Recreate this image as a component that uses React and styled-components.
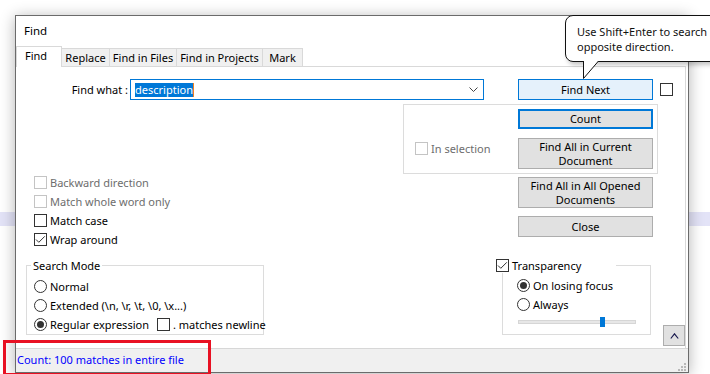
import React from "react";
import styled, { createGlobalStyle } from "styled-components";

const GlobalStyle = createGlobalStyle`
  html, body {
    margin: 0;
    padding: 0;
  }
  body {
    width: 710px;
    height: 374px;
    overflow: hidden;
    font-family: "Noto Sans", "Segoe UI", sans-serif;
    font-size: 11px;
    color: #000;
    background: linear-gradient(
      to bottom,
      #fff 0,
      #fff 212px,
      #e3e3f7 212px,
      #e3e3f7 226px,
      #fff 226px
    );
  }
`;

const Screen = styled.div`
  position: relative;
  width: 710px;
  height: 374px;
  box-sizing: border-box;
  padding: 15px 0 0 15px;
`;

const Window = styled.div`
  width: 674px;
  height: 358px;
  box-sizing: border-box;
  border: 1px solid #6b6b6b;
  background: #fff;
  box-shadow: 0 2px 14px rgba(0, 0, 0, 0.3);
  display: flex;
  flex-direction: column;
`;

const TitleBar = styled.div`
  height: 30px;
  line-height: 30px;
  padding-left: 8px;
  font-size: 11.5px;
`;

const TabBar = styled.div`
  height: 20px;
  display: flex;
  align-items: flex-end;
`;

const Tab = styled.div`
  box-sizing: border-box;
  width: ${(p) => p.$w}px;
  height: ${(p) => (p.$active ? 21 : 18)}px;
  margin-left: ${(p) => (p.$first ? 0 : -1)}px;
  margin-bottom: ${(p) => (p.$active ? -1 : 0)}px;
  padding-right: ${(p) => (p.$active ? 6 : 0)}px;
  border: 1px solid #d9d9d9;
  border-bottom: none;
  background: ${(p) => (p.$active ? "#fff" : "#f0f0f0")};
  text-align: center;
  line-height: ${(p) => (p.$active ? 18 : 17)}px;
  position: relative;
  z-index: ${(p) => (p.$active ? 1 : 0)};
`;

const Panel = styled.div`
  width: 670px;
  height: 282px;
  box-sizing: border-box;
  border-top: 1px solid #d9d9d9;
  border-right: 1px solid #d9d9d9;
  display: flex;
  flex-direction: column;
`;

const FindRow = styled.div`
  margin-top: 12px;
  height: 21px;
  display: flex;
  align-items: center;
`;

const FieldLabel = styled.span`
  width: 112px;
  text-align: right;
`;

const ComboBox = styled.div`
  box-sizing: border-box;
  margin-left: 2px;
  width: 354px;
  height: 21px;
  border: 1px solid #0078d7;
  display: flex;
  align-items: center;
  padding: 0 5px 0 4px;
`;

const Selected = styled.span`
  background: #0078d7;
  color: #fff;
  line-height: 14px;
  border-right: 1px solid #f0801e;
`;

const Chevron = styled.svg`
  margin-left: auto;
`;

const Button = styled.button`
  box-sizing: border-box;
  flex: none;
  width: 135px;
  height: ${(p) => p.$h || 21}px;
  margin: ${(p) => p.$mt || 0}px 0 0 ${(p) => p.$ml || 0}px;
  padding: 0;
  font: inherit;
  line-height: 14px;
  color: #000;
  background: ${(p) => (p.$hot ? "#e5f1fb" : "#e1e1e1")};
  border: ${(p) =>
    p.$focus
      ? "2px solid #0078d7"
      : p.$hot
      ? "1px solid #0078d7"
      : "1px solid #adadad"};
`;

const CheckRow = styled.div`
  display: flex;
  align-items: center;
  height: 19px;
  margin: ${(p) => p.$mt || 0}px 0 0 ${(p) => p.$ml || 0}px;
  color: ${(p) => (p.$disabled ? "#6d6d6d" : "#000")};
  white-space: nowrap;
`;

const Box = styled.span`
  box-sizing: border-box;
  flex: none;
  width: 13px;
  height: 13px;
  margin-right: 3px;
  border: 1px solid ${(p) => (p.$disabled ? "#c4c4c4" : "#333")};
  background: #fff;
  display: flex;
  align-items: center;
  justify-content: center;
`;

const Round = styled(Box)`
  border-radius: 50%;
`;

const Dot = styled.span`
  width: 7px;
  height: 7px;
  border-radius: 50%;
  background: #333;
`;

const Middle = styled.div`
  margin-top: 4px;
  display: flex;
  align-items: flex-start;
`;

const LeftOptions = styled.div`
  width: 387px;
  box-sizing: border-box;
  padding: 69px 0 0 18px;
`;

const RightColumn = styled.div`
  width: 255px;
  display: flex;
  flex-direction: column;
`;

const SelectionGroup = styled.div`
  box-sizing: border-box;
  width: 255px;
  height: 70px;
  border: 1px solid #dcdcdc;
  display: flex;
  align-items: flex-start;
`;

const ButtonStack = styled.div`
  margin-left: auto;
  margin-right: 4px;
  padding-top: 4px;
  display: flex;
  flex-direction: column;
`;

const Bottom = styled.div`
  margin-top: 16px;
  display: flex;
  align-items: flex-start;
`;

const GroupBox = styled.div`
  box-sizing: border-box;
  width: ${(p) => p.$w}px;
  height: 70px;
  margin-left: ${(p) => p.$ml}px;
  border: 1px solid #dcdcdc;
  padding-left: ${(p) => p.$pl}px;
`;

const Legend = styled.div`
  width: fit-content;
  height: 15px;
  line-height: 15px;
  margin: -8px 0 ${(p) => p.$mb}px ${(p) => p.$ml}px;
  padding: 0 2px;
  background: #fff;
  display: flex;
  align-items: center;
`;

const LegendCheck = styled(Legend)`
  width: 120px;
  padding: 0;
`;

const Slider = styled.div`
  position: relative;
  width: 118px;
  height: 10px;
  margin: 3px 0 0 1px;
  display: flex;
  align-items: center;
`;

const Track = styled.div`
  width: 100%;
  height: 4px;
  box-sizing: border-box;
  background: #e7e7e7;
  border: 1px solid #d6d6d6;
`;

const Thumb = styled.div`
  position: absolute;
  top: 0;
  left: ${(p) => p.$at}px;
  width: 5px;
  height: 10px;
  background: #0078d7;
`;

const UpButton = styled.button`
  box-sizing: border-box;
  width: 22px;
  height: 21px;
  margin: 60px 0 0 12px;
  padding: 0;
  background: #e1e1e1;
  border: 1px solid #adadad;
  display: flex;
  align-items: center;
  justify-content: center;
`;

const StatusBar = styled.div`
  box-sizing: border-box;
  height: 24px;
  border-top: 1px solid #d7d7d7;
  background: #f0f0f0;
  padding: 3px 2px 0 1px;
  display: flex;
  color: #0000ff;
  line-height: 15px;
`;

const Grip = styled.svg`
  margin: 11px 0 0 auto;
`;

const Tooltip = styled.div`
  position: absolute;
  left: 565px;
  top: 15px;
  width: 170px;
  height: 47px;
  box-sizing: border-box;
  border: 1px solid #111;
  border-radius: 8px;
  background: #fff;
  box-shadow: 2px 3px 4px rgba(0, 0, 0, 0.22);
  padding: 8px 0 0 11px;
  line-height: 15px;
  font-size: 11px;
  color: #111;
`;

const TooltipTail = styled.svg`
  position: absolute;
  left: 16px;
  top: 45px;
`;

const Highlight = styled.div`
  position: absolute;
  left: 3px;
  top: 340px;
  width: 208px;
  height: 36px;
  box-sizing: border-box;
  border: 3px solid #e81123;
`;

const tabs = [
  { label: "Find", w: 46, active: true },
  { label: "Replace", w: 49 },
  { label: "Find in Files", w: 68 },
  { label: "Find in Projects", w: 87 },
  { label: "Mark", w: 41 },
];

const Check = ({ checked, disabled, children, mt, ml }) => (
  <CheckRow $disabled={disabled} $mt={mt} $ml={ml}>
    <Box $disabled={disabled}>
      {checked && (
        <svg width="11" height="11" viewBox="0 0 11 11">
          <polyline points="1,5.5 3.8,8.3 9.8,2.3" fill="none" stroke="#333" strokeWidth="1" />
        </svg>
      )}
    </Box>
    {children}
  </CheckRow>
);

const Radio = ({ on, children }) => (
  <CheckRow>
    <Round>{on && <Dot />}</Round>
    {children}
  </CheckRow>
);

export default function App() {
  return (
    <Screen>
      <GlobalStyle />
      <Window>
        <TitleBar>Find</TitleBar>
        <TabBar>
          {tabs.map((t, i) => (
            <Tab key={t.label} $w={t.w} $active={t.active} $first={i === 0}>
              {t.label}
            </Tab>
          ))}
        </TabBar>
        <Panel>
          <FindRow>
            <FieldLabel>Find what :</FieldLabel>
            <ComboBox>
              <Selected>description</Selected>
              <Chevron width="9" height="5" viewBox="0 0 9 5">
                <polyline points="0.5,0.5 4.5,4.5 8.5,0.5" fill="none" stroke="#444" strokeWidth="1" />
              </Chevron>
            </ComboBox>
            <Button $hot $ml={34}>Find Next</Button>
            <Check ml={7} />
          </FindRow>

          <Middle>
            <LeftOptions>
              <Check disabled>Backward direction</Check>
              <Check disabled>Match whole word only</Check>
              <Check>Match case</Check>
              <Check checked>Wrap around</Check>
            </LeftOptions>
            <RightColumn>
              <SelectionGroup>
                <Check disabled ml={11} mt={34}>In selection</Check>
                <ButtonStack>
                  <Button $focus $h={20}>Count</Button>
                  <Button $h={31} $mt={9}>
                    Find All in Current
                    <br />
                    Document
                  </Button>
                </ButtonStack>
              </SelectionGroup>
              <Button $h={31} $mt={3} $ml={115}>
                Find All in All Opened
                <br />
                Documents
              </Button>
              <Button $mt={8} $ml={115}>Close</Button>
            </RightColumn>
          </Middle>

          <Bottom>
            <GroupBox $w={238} $ml={10} $pl={7}>
              <Legend $ml={-3} $mb={4}>Search Mode</Legend>
              <Radio>Normal</Radio>
              <Radio>Extended (\n, \r, \t, \0, \x...)</Radio>
              <CheckRow>
                <Round>
                  <Dot />
                </Round>
                Regular expression
                <Check ml={8}>. matches newline</Check>
              </CheckRow>
            </GroupBox>
            <GroupBox $w={149} $ml={238} $pl={14}>
              <LegendCheck $ml={-21} $mb={3}>
                <Check checked>Transparency</Check>
              </LegendCheck>
              <Radio on>On losing focus</Radio>
              <Radio>Always</Radio>
              <Slider>
                <Track />
                <Thumb $at={82} />
              </Slider>
            </GroupBox>
            <UpButton>
              <svg width="9" height="6" viewBox="0 0 9 6">
                <polyline points="0.8,5.5 4.5,0.8 8.2,5.5" fill="none" stroke="#1c1c50" strokeWidth="1.2" />
              </svg>
            </UpButton>
          </Bottom>
        </Panel>
        <StatusBar>
          Count: 100 matches in entire file
          <Grip width="8" height="8" viewBox="0 0 8 8">
            {[
              [6, 0],
              [3, 3],
              [6, 3],
              [0, 6],
              [3, 6],
              [6, 6],
            ].map(([x, y]) => (
              <rect key={`${x}-${y}`} x={x} y={y} width="2" height="2" fill="#b8b8b8" />
            ))}
          </Grip>
        </StatusBar>
      </Window>

      <Tooltip>
        Use Shift+Enter to search
        <br />
        opposite direction.
        <TooltipTail width="18" height="19" viewBox="0 0 18 19">
          <path d="M1.5 0 V17.5 L16.5 0" fill="#fff" stroke="#111" strokeWidth="1" />
        </TooltipTail>
      </Tooltip>
      <Highlight />
    </Screen>
  );
}
